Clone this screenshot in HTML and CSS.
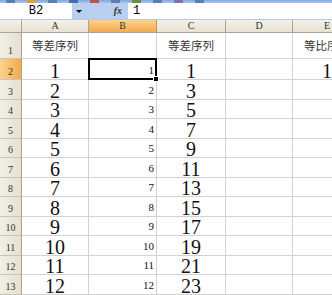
FILE: index.html
```html
<!DOCTYPE html>
<html>
<head>
<meta charset="utf-8">
<link rel="stylesheet" href="styles.css">
</head>
<body>
<div class="toolbar"><span class="ic i1"></span><span class="ic i2"></span><span class="ic i3"></span><span class="ic i4"></span><span class="ic i5"></span><span class="ic i6"></span><span class="ic i7"></span><span class="ic i8"></span><span class="ic i9"></span><span class="ic i10"></span></div>
<div class="fbar">
  <div class="namebox">B2</div>
  <div class="nbtn"><span class="tri"></span></div>
  <div class="fxarea"><span class="fx">fx</span></div>
  <div class="input">1</div>
</div>
<div class="sheet">
  <div class="corner"></div><div class="ch">A</div><div class="ch hl">B</div><div class="ch">C</div><div class="ch">D</div><div class="ch">E</div>

  <div class="rh r1">1</div><div class="c t1">等差序列</div><div class="c"></div><div class="c t1">等差序列</div><div class="c"></div><div class="c t1 e1">等比序列</div>

  <div class="rh hl">2</div><div class="c big">1</div><div class="c sm selc">1</div><div class="c big">1</div><div class="c"></div><div class="c big">1</div>
  <div class="rh">3</div><div class="c big">2</div><div class="c sm">2</div><div class="c big">3</div><div class="c"></div><div class="c"></div>
  <div class="rh">4</div><div class="c big">3</div><div class="c sm">3</div><div class="c big">5</div><div class="c"></div><div class="c"></div>
  <div class="rh">5</div><div class="c big">4</div><div class="c sm">4</div><div class="c big">7</div><div class="c"></div><div class="c"></div>
  <div class="rh">6</div><div class="c big">5</div><div class="c sm">5</div><div class="c big">9</div><div class="c"></div><div class="c"></div>
  <div class="rh">7</div><div class="c big">6</div><div class="c sm">6</div><div class="c big">11</div><div class="c"></div><div class="c"></div>
  <div class="rh">8</div><div class="c big">7</div><div class="c sm">7</div><div class="c big">13</div><div class="c"></div><div class="c"></div>
  <div class="rh">9</div><div class="c big">8</div><div class="c sm">8</div><div class="c big">15</div><div class="c"></div><div class="c"></div>
  <div class="rh">10</div><div class="c big">9</div><div class="c sm">9</div><div class="c big">17</div><div class="c"></div><div class="c"></div>
  <div class="rh">11</div><div class="c big">10</div><div class="c sm">10</div><div class="c big">19</div><div class="c"></div><div class="c"></div>
  <div class="rh">12</div><div class="c big">11</div><div class="c sm">11</div><div class="c big">21</div><div class="c"></div><div class="c"></div>
  <div class="rh">13</div><div class="c big">12</div><div class="c sm">12</div><div class="c big">23</div><div class="c"></div><div class="c"></div>
</div>
</body>
</html>
```
FILE: styles.css
```css
html, body {
  margin: 0;
  padding: 0;
  background: #ffffff;
  overflow: hidden;
  width: 332px;
  height: 295px;
}
body {
  font-family: "Liberation Serif", "Noto Sans CJK SC", serif;
}
.toolbar {
  height: 3px;
  background: linear-gradient(#7ea6e0, #a9c6f0);
  display: flex;
  gap: 12px;
  padding-left: 6px;
  overflow: hidden;
}
.ic {
  width: 9px;
  height: 3px;
  background: #5a7fb8;
}
.i2 { background: #d9a23c; }
.i4 { background: #3d6fb6; }
.i5 { background: #c0504d; }
.i7 { background: #6b8e3a; }
.i9 { background: #8a6fb0; }
.fbar {
  height: 17px;
  display: flex;
  background: #ffffff;
  border-bottom: 1px solid #b7c8e4;
  box-sizing: border-box;
}
.namebox {
  width: 72px;
  font-size: 12px;
  line-height: 16px;
  text-align: center;
  color: #000;
  font-family: "Liberation Mono", monospace;
}
.nbtn {
  width: 14px;
  background: #b9cff0;
  display: flex;
  align-items: center;
  justify-content: center;
}
.tri {
  width: 0;
  height: 0;
  border-left: 3px solid transparent;
  border-right: 3px solid transparent;
  border-top: 3px solid #000;
}
.fxarea {
  width: 42px;
  background: #b9cff0;
  display: flex;
  align-items: center;
  justify-content: flex-end;
  padding-right: 6px;
  box-sizing: border-box;
}
.fx {
  font-style: italic;
  font-weight: bold;
  font-size: 10px;
  line-height: 10px;
  color: #333;
}
.input {
  flex: 1;
  font-size: 12px;
  line-height: 16px;
  padding-left: 5px;
  font-family: "Liberation Mono", monospace;
}
.sheet {
  display: grid;
  grid-template-columns: 22px 67px 68px 69px 67px 69px;
  grid-template-rows: 13px 26px 21px repeat(11, 19.5px);
  width: 332px;
  overflow: hidden;
}
.corner, .ch, .rh {
  background: linear-gradient(#f3f1e9, #e6e2d3);
  border-right: 1px solid #a8a597;
  border-bottom: 1px solid #a8a597;
  box-sizing: border-box;
  color: #333;
}
.ch {
  font-size: 10px;
  line-height: 12px;
  text-align: center;
}
.rh {
  background: linear-gradient(90deg, #f1efe6, #e4e0d1);
  border-bottom-color: #c9c5b5;
  font-size: 10px;
  line-height: 12px;
  text-align: center;
  display: flex;
  align-items: flex-end;
  justify-content: center;
  padding-bottom: 1px;
}
.ch.hl {
  background: linear-gradient(#fbd38e, #f5a94c);
  border-right-color: #c8924a;
}
.rh.hl {
  background: linear-gradient(90deg, #fbd38e, #f5a94c);
}
.c {
  border-right: 1px solid #d2d2d2;
  border-bottom: 1px solid #d2d2d2;
  box-sizing: border-box;
  color: #111;
  white-space: nowrap;
}
.t1 {
  font-family: "Noto Sans CJK SC", sans-serif;
  font-size: 11.5px;
  line-height: 24px;
  text-align: center;
  color: #333;
}
.e1 {
  text-align: center;
}
.big {
  font-size: 20px;
  line-height: 16px;
  text-align: center;
  display: flex;
  align-items: flex-end;
  justify-content: center;
}
.sm {
  font-size: 11px;
  line-height: 12px;
  text-align: right;
  padding-right: 2px;
  display: flex;
  align-items: flex-end;
  justify-content: flex-end;
  padding-bottom: 3px;
}
.selc {
  position: relative;
}
.selc::after {
  content: "";
  position: absolute;
  left: -1px;
  top: -1px;
  right: -1px;
  bottom: -1px;
  border: 2px solid #000;
}
.selc::before {
  content: "";
  position: absolute;
  right: -3px;
  bottom: -3px;
  width: 4px;
  height: 4px;
  background: #000;
  border: 1px solid #fff;
  z-index: 2;
}
```
